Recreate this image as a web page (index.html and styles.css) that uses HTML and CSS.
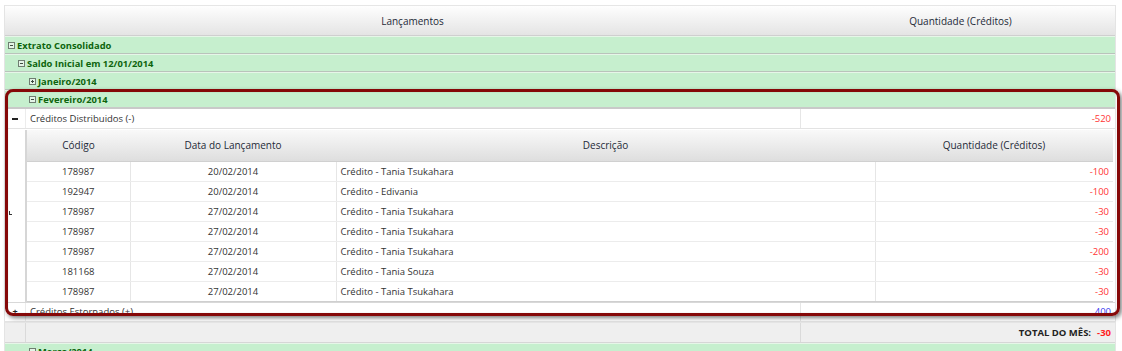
FILE: index.html
```html
<!DOCTYPE html>
<html lang="pt">
<head>
<meta charset="utf-8">
<title>Extrato</title>
<link rel="stylesheet" href="styles.css">
</head>
<body>
<div class="page">
  <div class="grid">
    <div class="row head">
      <div class="c-tog"></div>
      <div class="c-main center">Lançamentos</div>
      <div class="c-qty center">Quantidade (Créditos)</div>
    </div>

    <div class="row group lvl0">
      <svg class="ico" viewBox="0 0 7 7"><rect x="0.5" y="0.5" width="6" height="6"/><line x1="2" y1="3.5" x2="5" y2="3.5"/></svg>
      <span>Extrato Consolidado</span>
    </div>
    <div class="row group lvl1">
      <svg class="ico" viewBox="0 0 7 7"><rect x="0.5" y="0.5" width="6" height="6"/><line x1="2" y1="3.5" x2="5" y2="3.5"/></svg>
      <span>Saldo Inicial em 12/01/2014</span>
    </div>
    <div class="row group lvl2">
      <svg class="ico" viewBox="0 0 7 7"><rect x="0.5" y="0.5" width="6" height="6"/><line x1="2" y1="3.5" x2="5" y2="3.5"/><line x1="3.5" y1="2" x2="3.5" y2="5"/></svg>
      <span>Janeiro/2014</span>
    </div>
    <div class="row group lvl2 last">
      <svg class="ico" viewBox="0 0 7 7"><rect x="0.5" y="0.5" width="6" height="6"/><line x1="2" y1="3.5" x2="5" y2="3.5"/></svg>
      <span>Fevereiro/2014</span>
    </div>

    <div class="row sub">
      <div class="c-tog"><span class="dash"></span></div>
      <div class="c-main">Créditos Distribuidos (-)</div>
      <div class="c-qty right neg">-520</div>
    </div>

    <div class="row nest">
      <div class="c-tog"><span class="corner"></span></div>
      <div class="c-inner">
        <table class="items">
          <colgroup>
            <col class="w-cod"><col class="w-date"><col><col class="w-q">
          </colgroup>
          <thead>
            <tr><th>Código</th><th>Data do Lançamento</th><th>Descrição</th><th>Quantidade (Créditos)</th></tr>
          </thead>
          <tbody>
            <tr><td class="center">178987</td><td class="center">20/02/2014</td><td>Crédito - Tania Tsukahara</td><td class="right neg">-100</td></tr>
            <tr><td class="center">192947</td><td class="center">20/02/2014</td><td>Crédito - Edivania</td><td class="right neg">-100</td></tr>
            <tr><td class="center">178987</td><td class="center">27/02/2014</td><td>Crédito - Tania Tsukahara</td><td class="right neg">-30</td></tr>
            <tr><td class="center">178987</td><td class="center">27/02/2014</td><td>Crédito - Tania Tsukahara</td><td class="right neg">-30</td></tr>
            <tr><td class="center">178987</td><td class="center">27/02/2014</td><td>Crédito - Tania Tsukahara</td><td class="right neg">-200</td></tr>
            <tr><td class="center">181168</td><td class="center">27/02/2014</td><td>Crédito - Tania Souza</td><td class="right neg">-30</td></tr>
            <tr><td class="center">178987</td><td class="center">27/02/2014</td><td>Crédito - Tania Tsukahara</td><td class="right neg">-30</td></tr>
          </tbody>
        </table>
      </div>
    </div>

    <div class="row sub est">
      <div class="c-tog"><span class="plus">+</span></div>
      <div class="c-main">Créditos Estornados (+)</div>
      <div class="c-qty right pos">400</div>
    </div>

    <div class="row total">
      <div class="c-tog"></div>
      <div class="c-main"></div>
      <div class="c-qty right"><b>TOTAL DO MÊS:</b><b class="neg tot">-30</b></div>
    </div>

    <div class="row group lvl2">
      <svg class="ico" viewBox="0 0 7 7"><rect x="0.5" y="0.5" width="6" height="6"/><line x1="2" y1="3.5" x2="5" y2="3.5"/></svg>
      <span>Março/2014</span>
    </div>
  </div>
  <div class="highlight"></div>
</div>
</body>
</html>
```

FILE: styles.css
```css
* { box-sizing: border-box; }
html, body { margin: 0; padding: 0; background: #fff; }
body {
  font-family: "Open Sans", "DejaVu Sans", sans-serif;
  font-size: 9.5px;
  color: #333;
  overflow: hidden;
}
.page {
  position: relative;
  padding: 5px 6px 0 4px;
}
.grid {
  display: flex;
  flex-direction: column;
  border-left: 1px solid #e4e4e4;
  border-right: 1px solid #e4e4e4;
}
.row { display: flex; align-items: stretch; }
.c-tog { width: 20px; flex: none; display: flex; align-items: center; justify-content: center; position: relative; }
.c-main { flex: 1; display: flex; align-items: center; padding-left: 4px; border-left: 1px solid #ececec; }
.c-qty { width: 315px; flex: none; display: flex; align-items: center; padding: 0 4px; border-left: 1px solid #e6e6e6; }
.center { justify-content: center; text-align: center; }
.right { justify-content: flex-end; text-align: right; }
.neg { color: #ff3535; }
.pos { color: #3a3af0; }

.head {
  height: 31px;
  background: linear-gradient(#fefefe, #e4e4e4);
  border-top: 1px solid #e6e6e6;
  border-bottom: 1px solid #cfcfcf;
  font-size: 10px;
  color: #1e2a38;
}
.head .c-main, .head .c-tog { border-left: none; }
.head .c-main { padding-left: 0; }
.head .c-qty { border-left: none; padding-left: 10px; }

.group {
  height: 18px;
  background: #c6efce;
  border-bottom: 1px solid #b9c3bb;
  border-top: 1px solid #e6f6e8;
  align-items: center;
  color: #0d640d;
  font-weight: 700;
  font-size: 9.4px;
}
.group span { margin-left: 2px; }
.lvl0 { padding-left: 3px; }
.lvl1 { padding-left: 13px; }
.lvl2 { padding-left: 24px; }
.group.last { border-bottom: 2px solid #c9c9c9; height: 19px; }
.ico { width: 7px; height: 7px; flex: none; }
.ico rect { fill: #e4f5e7; stroke: #6f7d71; stroke-width: 1; }
.ico line { stroke: #3d4a3f; stroke-width: 1; }

.sub {
  height: 20px;
  border-bottom: 1px solid #e3e3e3;
}
.dash { display: block; width: 6px; height: 2px; background: #222; }
.plus { font-weight: 700; font-size: 9px; color: #222; line-height: 1; }

.nest { border-bottom: 1px solid #d8d8d8; }
.nest .c-tog { align-items: flex-start; }
.corner {
  position: absolute;
  left: 4px;
  top: 82px;
  width: 3px;
  height: 4px;
  border-left: 1px solid #333;
  border-bottom: 1px solid #333;
}
.c-inner {
  flex: 1;
  padding: 1px 2px 0 0;
}
.items {
  width: 100%;
  border-collapse: collapse;
  table-layout: fixed;
  border-left: 2px solid #d6d6d6;
}
.w-cod { width: 104px; }
.w-date { width: 206px; }
.w-q { width: 238px; }
.items th {
  height: 31px;
  font-weight: 400;
  font-size: 10px;
  color: #1e2a38;
  background: linear-gradient(#f9f9f9, #dedede);
  border-bottom: 1px solid #d0d0d0;
  padding: 0;
}
.items td {
  height: 20px;
  padding: 0 4px;
  border-bottom: 1px solid #ececec;
  border-left: 1px solid #e6e6e6;
  white-space: nowrap;
}
.items td:first-child { border-left: none; }
.items tr:last-child td { border-bottom: 1px solid #cfcfcf; }

.est { height: 19px; }
.total {
  height: 21px;
  background: #efefef;
  border-top: 1px solid #e6e6e6;
  border-bottom: 1px solid #d6d6d6;
}
.total .c-main { border-left-color: #dadada; }
.total .c-qty { border-left-color: #dadada; color: #222; font-size: 9.5px; }
.total .tot { margin-left: 6px; color: #ff1f1f; }

.highlight {
  position: absolute;
  left: 5px;
  top: 89px;
  width: 1115px;
  height: 227px;
  border: 3px solid #850808;
  border-radius: 8px;
  box-shadow: 2px 2px 4px rgba(0, 0, 0, 0.5), inset 0 0 1px rgba(0,0,0,0.3);
  pointer-events: none;
}
```
